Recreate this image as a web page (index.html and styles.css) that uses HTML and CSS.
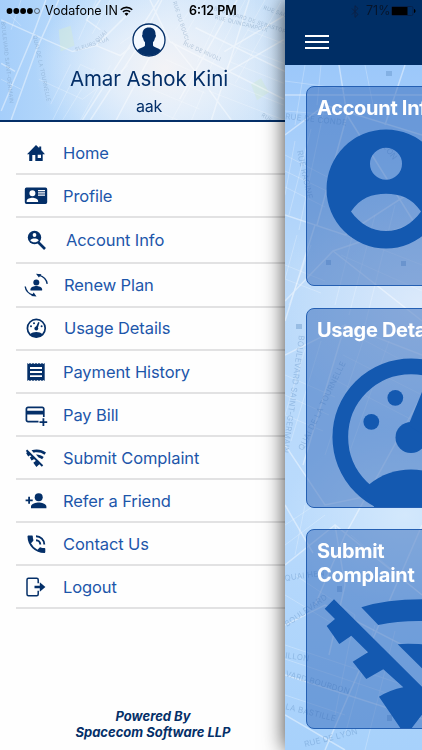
FILE: index.html
```html
<!DOCTYPE html>
<html lang="en">
<head>
<meta charset="utf-8">
<title>Account menu</title>
<link rel="stylesheet" href="styles.css">
</head>
<body>
<div class="app">
  <aside class="drawer">
    <header class="profile">
      <svg class="map" viewBox="0 0 285 121">
        <g class="park"><path d="M58 30l12-4 4 20-14 6zM252 85l10-6 8 14-12 8z"/></g>
        <g class="streets">
          <path d="M0 112L31 38 45 0M10 121L36 49 58 0M0 20l40 18 32 14 24-6 30-30M96 46l24 10 10-8M82 121l47-74 30-47M90 121l48-74 24-47M0 64l14 8M150 0l20 42 115 58M158 42l-42 79M172 42l30 38 30 41M180 100l46-82 12-18M225 52l60-36M196 28l90 44M250 0l-38 121M285 40l-78 45M100 0l-14 20 14 10"/>
        </g>
        <g class="lanes">
          <path d="M38 80l44 20 46-34M52 121l28-56 30 14M70 65l-20 40M110 66l-30 55M62 121l32-52M96 0l-18 40M110 0L92 34M166 60l40 18M160 74l46 20M152 90l48 20M148 108l30 13M176 30l22-30M186 34l20-34M198 62l30-62M210 70l36-70M222 78l44-78M236 84l46-82M210 92l75 29M220 80l65 26M230 62l55 22M238 46l47 18M248 30l37 14M140 30l-20 14M0 80l20 10M4 10l16 16M20 0l-10 30M192 85l-20 36M204 92l-12 29"/>
        </g>
        <g class="names">
          <text transform="translate(32 36) rotate(78)">QUAI DE LA TOURNELLE</text>
          <text transform="translate(75 52) rotate(-18)">SLEURS XUA</text>
          <text transform="translate(97 43) rotate(-45)">QUAI</text>
          <text transform="translate(0 22) rotate(84)">BOULEVARD SAINT-GERMAIN</text>
          <text transform="translate(214 10) rotate(18)">BOULEVARD DE SEBASTOPOL</text>
          <text transform="translate(215 19) rotate(14)">RUE QUINCAMPOIX</text>
          <text transform="translate(264 9) rotate(20)">RUE SAINT</text>
          <text transform="translate(173 2) rotate(72)">RUE DU BOUCL</text>
          <text transform="translate(183 45) rotate(24)">RUE DE RIVOLI</text>
          <text transform="translate(262 117) rotate(32)">RUE RA</text>
        </g>
      </svg>
      <svg class="avatar" viewBox="0 0 34 34"><circle cx="17" cy="17" r="16" fill="#f4f9ff" stroke="#042f68" stroke-width="1.3"/><path fill="#042f68" d="M17 4.5c4.600 0 6.800 2.800 6.500 7.200.8.300.5 2.500-.6 3.600-.4 1.900-1 3.100-1.900 4v3.200c1 2 5.500 2.400 7.900 4.700A15.500 15.500 0 0 1 5.100 27.200c2.400-2.300 6.900-2.700 7.900-4.700v-3.200c-.9-.9-1.500-2.100-1.900-4-1.100-1.100-1.400-3.300-.6-3.600C10.200 7.300 12.400 4.500 17 4.500z"/></svg>
      <div class="name">Amar Ashok Kini</div>
      <div class="user">aak</div>
    </header>
    <nav class="menu">
      <a class="item"><svg class="icon" viewBox="0 0 24 24"><path fill-rule="evenodd" d="M3 13.200L12 4l3.200 3V5.500h2V9L21 13.200h-2.300V20H5.200v-6.800zM8.300 14v6h3v-6zM13.700 13.800v3.300H17v-3.300z"/></svg><span>Home</span></a>
      <a class="item"><svg class="icon" viewBox="0 0 24 24"><path fill-rule="evenodd" d="M2.500 3.500h19a1.700 1.700 0 0 1 1.700 1.700v13a1.700 1.700 0 0 1-1.700 1.700h-19a1.700 1.700 0 0 1-1.700-1.700v-13a1.700 1.700 0 0 1 1.700-1.700zM8.400 6.300a3 3 0 1 0 0 6 3 3 0 0 0 0-6zM2.700 18h11.400v-1.200c0-2-3.800-3.100-5.700-3.100s-5.700 1.100-5.700 3.100zM14 6v1.200h7V6zm0 2.300v1.200h7V8.300zm0 2.300v1.200h7v-1.200z"/></svg><span>Profile</span></a>
      <a class="item item-account"><svg class="icon" viewBox="0 0 24 24"><circle cx="10.500" cy="9.500" r="6.700"/><path d="M14 14l7 7" stroke="#042f68" stroke-width="2.600"/><circle cx="10.500" cy="7" r="1.900" fill="#fff"/><path fill="#fff" d="M6.300 12.500c1-2.600 7.400-2.600 8.400 0-2 2.400-6.400 2.400-8.400 0z"/></svg><span>Account Info</span></a>
      <a class="item item-renew"><svg class="icon" viewBox="0 0 24 24"><circle cx="12.300" cy="9.400" r="3"/><path d="M6.500 17.500v-1.200c0-2 3.600-3.200 5.800-3.200s5.800 1.200 5.800 3.200v1.200z"/><path d="M15 2.200c4.300 1.300 7.500 4.500 8.200 8.600M1.200 13.500c.6 4.200 4 7.600 8.400 8.700" fill="none" stroke="#042f68" stroke-width="1.400"/><path d="M12 .8l5.500.4-2.600 3.300zM12.500 23.500l-5.300-.5 2.500-3.400z"/></svg><span>Renew Plan</span></a>
      <a class="item item-usage"><svg class="icon" viewBox="0 0 24 24"><circle cx="12.300" cy="12.300" r="8.900" fill="none" stroke="#042f68" stroke-width="1.700"/><path d="M6 18.500c3-3.200 9.600-3.200 12.600 0-3 3.600-9.600 3.600-12.600 0z"/><circle cx="12.300" cy="12.500" r="1.900"/><path d="M11.500 12l2.700-6 1.300.5-1.800 6z"/><circle cx="7" cy="10.300" r="1"/><circle cx="10" cy="7.300" r="1"/><circle cx="17.600" cy="10.300" r="1"/></svg><span>Usage Details</span></a>
      <a class="item"><svg class="icon" viewBox="0 0 24 24"><path fill-rule="evenodd" d="M3.300 3l1.300 1 1.400-1 1.500 1L9 3l1.500 1L12 3l1.500 1L15 3l1.500 1L18 3l1.400 1 1.300-1v18l-1.300-1-1.400 1-1.500-1-1.500 1-1.500-1-1.500 1-1.500-1L9 21l-1.500-1L6 21l-1.400-1-1.300 1zM6 7v1.900h12V7zm0 4.100V13h12v-1.900zm0 4.100v1.900h12v-1.900z"/></svg><span>Payment History</span></a>
      <a class="item"><svg class="icon" viewBox="0 0 24 24"><path d="M14.500 18.700H4a1.600 1.600 0 0 1-1.600-1.600V6A1.600 1.600 0 0 1 4 4.400h14.200A1.600 1.600 0 0 1 19.800 6v8" fill="none" stroke="#042f68" stroke-width="1.700"/><path d="M2.400 7.800h17.400v3.700H2.400zM18.500 15.200h1.800v3h2.900V20h-2.900v2.900h-1.800V20h-3v-1.800h3z"/></svg><span>Pay Bill</span></a>
      <a class="item"><svg class="icon" viewBox="0 0 24 24"><path d="M2.500 4.200L18.500 20" stroke="#042f68" stroke-width="1.900"/><path d="M7.500 4.200C13 2.600 18 3.600 22 6.500l-1.500 2.200c-3.200-2.200-7-3-10.800-2zM12 8.600c3-.1 5.500.8 7.700 2.400l-1.600 2.200c-1-.8-2.200-1.400-3.500-1.700zM2.100 7l2-1.400 3 3-2.900 2zM5.800 11.500l2.600-1.700 2.700 2.700-3.500 2zM9.300 16.700l3-2.200 3.600 3.300-3.500 3.300z"/></svg><span>Submit Complaint</span></a>
      <a class="item"><svg class="icon" viewBox="0 0 24 24"><circle cx="14.700" cy="8.200" r="4"/><path d="M7 19.300v-1.800c0-3 5.200-4.100 7.700-4.100s7.700 1.100 7.700 4.100v1.800zM4.200 7.700H6v2.700h2.700v1.800H6v2.600H4.200v-2.600H1.600v-1.800h2.600z"/></svg><span>Refer a Friend</span></a>
      <a class="item"><svg class="icon" viewBox="0 0 24 24"><path d="M4.500 3.500h3.300c.6 0 1 .4 1 1 0 1.200.2 2.400.6 3.500.1.400 0 .8-.3 1.100L7 11.300a15 15 0 0 0 6.500 6.500l2.200-2.200c.3-.3.7-.4 1-.2 1.200.4 2.400.6 3.600.6.500 0 1 .4 1 1v3c0 .5-.5 1-1 1A16.800 16.800 0 0 1 3.500 4.500c0-.5.500-1 1-1z"/><path d="M12 4.200c4.600 0 8.300 3.700 8.300 8.300M12 8.200c2.400 0 4.300 1.900 4.300 4.300" fill="none" stroke="#042f68" stroke-width="1.900"/></svg><span>Contact Us</span></a>
      <a class="item"><svg class="icon" viewBox="0 0 24 24"><path d="M14.200 8.200V4.700c0-.9-.6-1.500-1.500-1.500H4.500C3.600 3.200 3 3.800 3 4.700v14.600c0 .9.600 1.500 1.500 1.500h8.200c.9 0 1.500-.6 1.500-1.500v-3.500" fill="none" stroke="#042f68" stroke-width="1.500"/><path d="M10.500 10.700h5.300V7.300l5.600 4.700-5.600 4.700v-3.400h-5.300z"/></svg><span>Logout</span></a>
    </nav>
    <footer class="powered">Powered By<br>Spacecom Software LLP</footer>
  </aside>

  <main class="page">
    <div class="navbar"><div class="burger"><i></i><i></i><i></i></div></div>
    <div class="content">
      <svg class="map" viewBox="0 0 137 685">
        <g class="streets">
          <path d="M0 70l40-30 97 30M0 150l60 20 77-50M54 0l8 50-30 110M62 50l75 120M0 236l48-50 89-30M30 160l-30 96M48 186l89 70M0 290l60-30 77 30M60 260L18 400M0 380l40 60 97-20M137 330L60 470 30 540M0 440l28 48M0 500l50-40 87 70M0 560l40-20 97 50M50 460l10 60-16 70M0 610l137 44M137 460L40 685M0 650l60 35M120 0l-20 60M0 30h137"/>
        </g>
        <g class="lanes">
          <path d="M0 90l50 26M0 106l46 22M0 122l40 20M10 76L0 130M26 64L4 150M40 40L14 165M0 200l40 16M0 214l36 14M12 170L0 214M26 180L4 240M60 170l77 30M56 190l81 36M70 160l-20 80M90 150l-26 100M110 140l-30 120M0 310l50 22M0 330l44 20M0 350l38 16M20 284L0 350M36 276L6 376M62 266l75 40M58 290l79 40M52 316l85 44M80 270l-40 120M104 276L60 400M0 460l30-20M0 480l40-30M10 510l60 40M0 530l60 36M66 470l71 60M20 440l-10 50M0 580l137 46M0 594l137 46M70 550l-20 100M90 560L60 670M110 566L80 685M0 630l60 20M80 0l10 50M20 0L10 60M36 0l-4 40M0 16l60 8M0 46l50 4"/>
        </g>
        <g class="names big">
          <text transform="translate(0 54) rotate(6)">RUE DE CONDE</text>
          <text transform="translate(12 86) rotate(78)">RUE RACINE</text>
          <text transform="translate(14 270) rotate(98)">BOULEVARD SAINT-GERMAIN</text>
          <text transform="translate(18 386) rotate(-64)">QUAI DE LA TOURNELLE</text>
          <text transform="translate(90 72) rotate(52)">ODEON</text>
          <text transform="translate(0 516) rotate(-8)">QUAI HEN</text>
          <text transform="translate(2 562) rotate(-35)">BOULEVARD</text>
          <text transform="translate(0 593) rotate(8)">ILLON</text>
          <text transform="translate(0 611) rotate(16)">VARD BOURDON</text>
          <text transform="translate(0 644) rotate(14)">LA BASTILLE</text>
          <text transform="translate(20 682) rotate(-14)">RUE DE LYON</text>
          <path d="M101 6h6v5h-6zM41 195h5v5h-5zM116 196h5v5h-5zM11 259h6v5h-6zM52 521h5v6h-5zM102 650h5v6h-5z"/>
        </g>
      </svg>
      <section class="card">
        <svg class="art" viewBox="0 0 200 200"><path fill-rule="evenodd" d="M80 43.500a59.500 59.500 0 1 0 0 119 59.500 59.500 0 0 0 0-119zM80 61.700a16 16 0 1 1 0 32 16 16 0 0 1 0-32zM45 125.500C54 112 66 107.700 80 107.700S106 112 115 125.500C106 138 94 145 80 145S54 138 45 125.500z"/></svg>
        <h2>Account Info</h2>
      </section>
      <section class="card">
        <svg class="art" viewBox="0 0 200 200"><circle cx="105" cy="129" r="70.700" fill="none" stroke="#1459b0" stroke-width="15.700"/><path d="M57 182l6-5.500c24-20 60-20 84 0l6 5.500-20 30H77z"/><circle cx="105" cy="129.500" r="15.500"/><path d="M102.500 117L118 79l13 5-11 45z"/><circle cx="89.300" cy="89.800" r="7.900"/><circle cx="65.300" cy="113.800" r="7.900"/></svg>
        <h2>Usage Details</h2>
      </section>
      <section class="card">
        <svg class="art" viewBox="0 0 200 200"><path d="M28 70.300L18.700 79.700 29 90l-8.300 7L33.300 115l12-8.300L62 123.300l-15.300 9.400L60.300 150l17-9.700 20 18Q84 161 73 167.700L95 200h10l20-26v-7.300zM55.300 78.300Q80 70.300 116 70.300h10V92h-10Q92 91.700 72.300 96zM91.700 115.300Q102 114 126 116v33.300z"/></svg>
        <h2>Submit<br>Complaint</h2>
      </section>
    </div>
  </main>

  <div class="status">
    <svg class="signal" viewBox="0 0 36 8"><circle cx="3.500" cy="4" r="2.900"/><circle cx="10.300" cy="4" r="2.900"/><circle cx="17.100" cy="4" r="2.900"/><circle cx="23.900" cy="4" r="2.900"/><circle cx="31" cy="4" r="2.500" fill="none" stroke="#333" stroke-width=".7"/></svg>
    <span class="carrier">Vodafone IN</span>
    <svg class="wifi" viewBox="0 0 12 9"><path d="M.7 3.300a7.600 7.600 0 0 1 10.600 0M2.700 5.300a4.700 4.700 0 0 1 6.600 0" fill="none" stroke="#000" stroke-width="1.400"/><path d="M6 8.900L4.200 7a2.600 2.600 0 0 1 3.600 0z"/></svg>
    <span class="time">6:12 PM</span>
    <svg class="bluetooth" viewBox="0 0 8 13"><path d="M1 3.500l6 6-3 2.800V.7l3 2.800-6 6" fill="none" stroke="#0c2145" stroke-width="1"/></svg>
    <span class="percent">71%</span>
    <svg class="battery" viewBox="0 0 25 10"><rect x=".5" y=".5" width="21.500" height="9" rx="1.500" fill="none" stroke="#06214a"/><rect x="1" y="1" width="15.500" height="8"/><path d="M23 3v4c2-.6 2-3.400 0-4z"/></svg>
  </div>
</div>
</body>
</html>
```
FILE: styles.css
```css
* { box-sizing: border-box; }
body { margin: 0; font-family: Inter, "Liberation Sans", sans-serif; }
.app { position: relative; display: flex; width: 422px; height: 750px; overflow: hidden; background: #fff; }

.drawer { display: flex; flex-direction: column; flex: none; width: 285px; height: 750px; background: #fefefe; }
.profile {
  position: relative; display: flex; flex-direction: column; align-items: center; flex: none;
  width: 285px; height: 122px; padding: 23px 0 0 13px; border-bottom: 2px solid #042f68; color: #042f68; overflow: hidden;
  background: radial-gradient(ellipse 130px 95px at 165px 68px, #f3f3f6 0, rgba(236,242,250,.75) 45%, rgba(215,232,251,0) 100%), linear-gradient(90deg, #a5cefa 0, #bcdcfb 30%, #d0e5fa 60%, #c9e1f9 100%);
}
.map { position: absolute; left: 0; top: 0; width: 100%; height: 100%; fill: none; }
.park { fill: #d2eadd; opacity: .55; }
.streets { stroke: #fff; stroke-width: 1.5; opacity: .42; }
.lanes { stroke: #fff; stroke-width: .8; opacity: .3; }
.names { fill: #688aad; opacity: .38; font-size: 5.5px; letter-spacing: .2px; }
.names.big { fill: #5585bb; font-size: 8px; opacity: .35; }
.avatar { position: relative; width: 34px; height: 34px; }
.name { position: relative; margin-top: 8px; font-size: 20.500px; line-height: 27px; letter-spacing: -.1px; white-space: nowrap; }
.user { position: relative; margin-top: 2px; font-size: 16px; line-height: 24px; letter-spacing: -.3px; }

.menu { display: flex; flex-direction: column; padding: 10px 0 0 16px; }
.item { display: flex; align-items: center; height: 43px; padding-left: 8px; border-bottom: 2px solid #e2e2e3; color: #1d56aa; font-size: 16.500px; line-height: 20px; white-space: nowrap; }
.item span { margin-left: 15px; letter-spacing: -.1px; }
.icon { flex: none; width: 24px; height: 24px; fill: #042f68; }
.item-account { height: 46px; }
.item-account span { margin-left: 18px; }
.item-renew, .item-usage { height: 43.500px; }
.item-renew span, .item-usage span { margin-left: 16px; }
.powered { margin-top: auto; padding: 0 0 10px 21px; color: #042f68; font-size: 13px; font-weight: 700; font-style: italic; line-height: 16px; text-align: center; }

.page { position: relative; flex: none; width: 137px; height: 750px; box-shadow: 0 0 20px rgba(0,0,0,.75); }
.navbar { height: 65px; padding: 35px 0 0 20px; background: #002e65; }
.burger { display: flex; flex-direction: column; gap: 4px; width: 24px; }
.burger i { height: 2px; background: #fff; }
.content {
  position: relative; display: flex; flex-direction: column; gap: 21.500px; height: 685px; padding: 21px 0 0 21px; overflow: hidden;
  background: radial-gradient(ellipse 150px 130px at 137px 240px, #dceafb 0, rgba(220,234,251,0) 100%), radial-gradient(ellipse 120px 90px at 120px 450px, #d3e8fc 0, rgba(211,232,252,0) 100%), linear-gradient(#9cc8fa 0, #b9d9fa 30%, #b9dafc 65%, #a7d1fb 100%);
}
.card { position: relative; flex: none; width: 200px; height: 200px; padding: 9px 10px; overflow: hidden; border: 1px solid #2560b3; border-radius: 8px; background: rgba(41,96,181,.47); }
.art { position: absolute; left: -1px; top: -1px; width: 200px; height: 200px; fill: #1459b0; }
.card h2 { position: relative; margin: 0; color: #fff; font-size: 20px; font-weight: 700; line-height: 24px; letter-spacing: -.3px; white-space: nowrap; }

.status { position: absolute; left: 0; top: 0; display: flex; align-items: center; width: 422px; height: 22px; padding-left: 6px; color: #000; font-size: 12.500px; line-height: 22px; white-space: nowrap; }
.signal { width: 36px; height: 8px; }
.carrier { width: 73px; margin-left: 3px; }
.wifi { width: 13px; height: 10px; margin-left: 2px; }
.time { width: 50px; margin-left: 56px; font-weight: 600; }
.bluetooth { width: 8px; height: 13px; margin-left: 112px; }
.percent { width: 23px; margin-left: 7px; color: #07152b; }
.battery { width: 25px; height: 10px; margin-left: 2px; }
```
